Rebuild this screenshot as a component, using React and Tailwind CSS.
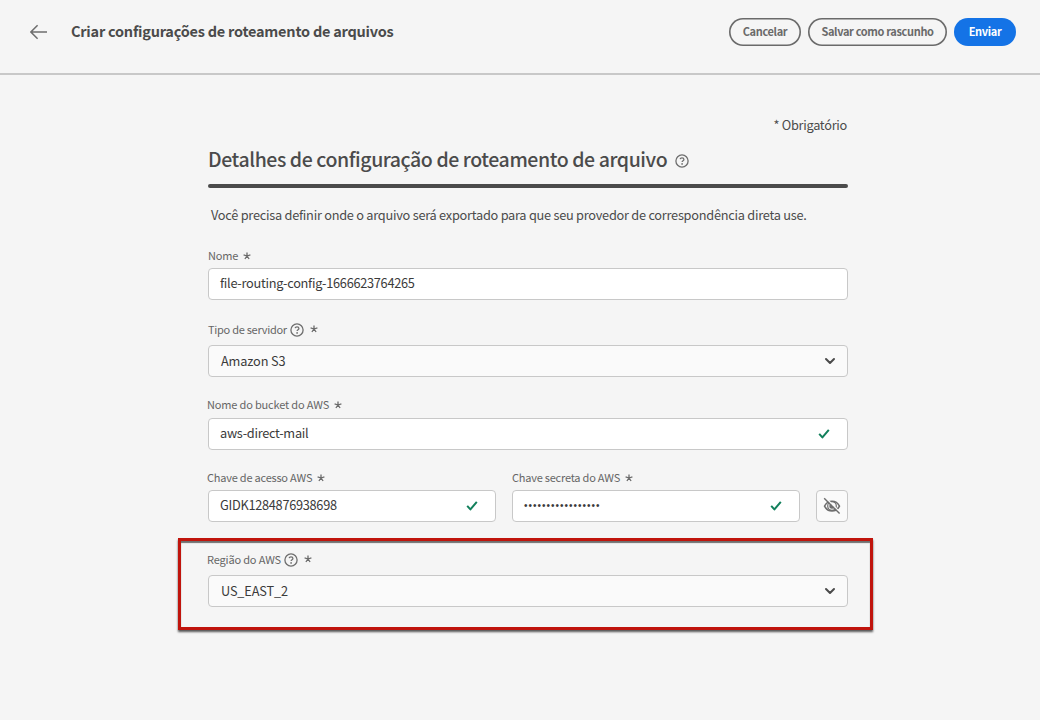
import React from "react";

function HelpIcon({ className }) {
  return (
    <svg className={className} width="14" height="14" viewBox="0 0 14 14" fill="none">
      <circle cx="7" cy="7" r="6.1" stroke="#6e6e6e" strokeWidth="1.3" />
      <path d="M5.1 5.2C5.3 4.2 6 3.8 7 3.8c1.1 0 1.9.6 1.9 1.6 0 1.3-1.8 1.4-1.8 2.7" stroke="#6e6e6e" strokeWidth="1.3" />
      <circle cx="7.1" cy="9.9" r=".85" fill="#6e6e6e" />
    </svg>
  );
}

function Asterisk({ className }) {
  return (
    <svg className={className} width="8" height="8" viewBox="0 0 8 8" fill="none" stroke="#6a6a6a" strokeWidth="1.3">
      <path d="M4 4V.4M4 4L.6 2.9M4 4l3.4-1.1M4 4L1.9 7M4 4l2.1 3" />
    </svg>
  );
}

function Check() {
  return (
    <svg width="12" height="10" viewBox="0 0 12 10" fill="none" stroke="#12805c" strokeWidth="2" strokeLinejoin="round">
      <path d="M1.2 4.9l3.200 3.500L10.800 .8" />
    </svg>
  );
}

function Chevron() {
  return (
    <svg width="12" height="8" viewBox="0 0 12 8" fill="none" stroke="#4b4b4b" strokeWidth="2" strokeLinecap="round" strokeLinejoin="round">
      <path d="M2 2l4 4 4-4" />
    </svg>
  );
}

function EyeOff() {
  return (
    <svg width="18" height="18" viewBox="0 0 18 18" fill="none">
      <path d="M1.5 9.2C3 6.3 5.8 4.3 9 4.3s6 2 7.5 4.9c-1.5 2.900-4.3 4.900-7.500 4.900s-6-2-7.500-4.900z" stroke="#6e6e6e" strokeWidth="1.5" />
      <circle cx="9" cy="9" r="4.300" stroke="#6e6e6e" strokeWidth="1.200" />
      <path d="M9 6.300a2.700 2.700 0 1 0 2.700 2.900H9z" fill="#6e6e6e" />
      <path d="M2.300.6l15.400 15.400" stroke="#fafafa" strokeWidth="1.400" />
      <path d="M1.200 1.200l15.400 15.400" stroke="#6e6e6e" strokeWidth="1.400" />
    </svg>
  );
}

function Label({ children, help, className, textClass = "tracking-[-0.17px]" }) {
  return (
    <div className={`flex h-4 items-center whitespace-nowrap text-[11px] leading-4 text-[#666666] ${className}`}>
      <span className={`pb-0.5 ${textClass}`}>{children}</span>
      {help && <HelpIcon className="ml-[3.5px]" />}
      <Asterisk className={help ? "ml-[6px] -mt-[2px]" : "ml-[5px]"} />
    </div>
  );
}

function Input({ children, valid, className = "" }) {
  return (
    <div className={`flex h-8 items-center justify-between rounded border border-[#c8c8c8] bg-white pr-[17px] pl-[11px] text-[12.75px] leading-5 tracking-[-0.28px] text-[#3b3b3b] ${className}`}>
      <span className="pb-0.5">{children}</span>
      {valid && <Check />}
    </div>
  );
}

function Select({ children }) {
  return (
    <div className="flex h-8 items-center justify-between rounded border border-[#c8c8c8] bg-[#fafafa] pr-[11px] pl-3 text-[12.75px] leading-5 tracking-[-0.15px] text-[#3b3b3b]">
      {children}
      <Chevron />
    </div>
  );
}

export default function App() {
  return (
    <div className="h-[720px] w-[1040px] overflow-hidden bg-[#f5f5f5] font-['Noto_Sans_CJK_JP','Noto_Sans',sans-serif]">
      <header className="flex h-[75px] items-start border-b-2 border-[#c8c8c8] pt-[18px] pr-6 pl-[30px]">
        <svg className="mt-[6px]" width="17" height="16" viewBox="0 0 17 16" fill="none" stroke="#6e6e6e" strokeWidth="1.5">
          <path d="M17 8H1M7.6 1.2L.9 8l6.700 6.800" />
        </svg>
        <h1 className="ml-6 text-[14.5px] leading-[26px] font-bold tracking-[-0.23px] whitespace-nowrap text-[#4b4b4b]">
          Criar configurações de roteamento de arquivos
        </h1>
        <div className="ml-auto flex gap-[7px] text-[11px] leading-6 font-bold tracking-[-0.35px] whitespace-nowrap text-[#6a6a6a]">
          <button className="h-7 w-[72px] rounded-full pb-0.5 shadow-[inset_0_0_0_1.6px_#6a6a6a]">Cancelar</button>
          <button className="h-7 w-[139px] rounded-full pb-0.5 shadow-[inset_0_0_0_1.6px_#6a6a6a]">Salvar como rascunho</button>
          <button className="h-7 w-[62px] rounded-full bg-[#1473e6] pb-0.5 text-white">Enviar</button>
        </div>
      </header>

      <main className="ml-[208px] w-[640px]">
        <p className="pt-10 pr-px text-right text-[12.75px] leading-5 tracking-[-0.28px] text-[#4b4b4b]">* Obrigatório</p>
        <div className="mt-[10px] flex h-[30px] items-center">
          <h2 className="-mt-[2px] text-[19.5px] leading-[30px] font-medium tracking-[-0.42px] whitespace-nowrap text-[#4b4b4b]">Detalhes de configuração de roteamento de arquivo</h2>
          <HelpIcon className="mt-[2px] ml-2" />
        </div>
        <div className="mt-[9px] h-1 rounded-full bg-[#4b4b4b]" />
        <p className="mt-[17px] ml-[3px] text-[12.75px] leading-5 tracking-[-0.25px] whitespace-nowrap text-[#4b4b4b]">
          Você precisa definir onde o arquivo será exportado para que seu provedor de correspondência direta use.
        </p>

        <Label className="mt-[23px]">Nome</Label>
        <Input className="mt-1">file-routing-config-1666623764265</Input>

        <Label help className="mt-[22px] mb-[7px]" textClass="tracking-[-0.28px]">Tipo de servidor</Label>
        <Select>Amazon S3</Select>

        <Label className="mt-5 mb-[5px] -ml-px">Nome do bucket do AWS</Label>
        <Input valid>aws-direct-mail</Input>

        <div className="mt-5 flex items-end">
          <div className="w-[288px]">
            <Label className="mb-1 -ml-px" textClass="tracking-[-0.22px]">Chave de acesso AWS</Label>
            <Input valid>GIDK1284876938698</Input>
          </div>
          <div className="ml-4 w-[288px]">
            <Label className="mb-1" textClass="tracking-[-0.22px]">Chave secreta do AWS</Label>
            <Input valid>
              <span className="block pt-0.5 font-['Liberation_Sans'] text-[10px] tracking-[1px]">•••••••••••••••••</span>
            </Input>
          </div>
          <button className="ml-4 flex size-8 items-center justify-center rounded border border-[#c8c8c8] bg-[#fafafa]">
            <EyeOff />
          </button>
        </div>

        <section className="-mr-[25px] -ml-[30px] mt-4 h-[92px] border-[3px] border-[#c0140c] pt-[11px] pr-[22px] pl-[27px] shadow-[0_2px_2px_rgba(0,0,0,0.65),inset_0_2px_1px_rgba(0,0,0,0.55)]">
          <Label help className="mb-[7px] -ml-px">Região do AWS</Label>
          <Select>US_EAST_2</Select>
        </section>
      </main>
    </div>
  );
}
